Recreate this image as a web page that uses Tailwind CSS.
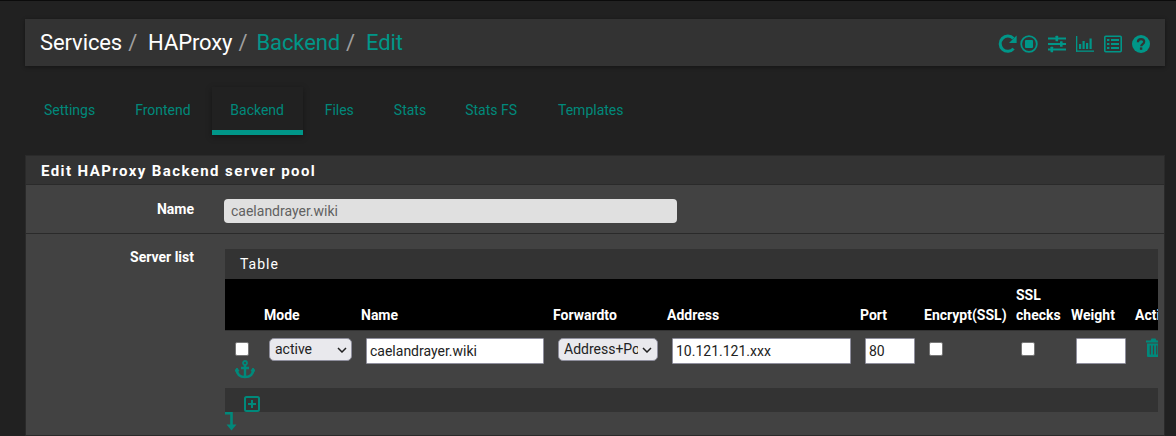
<!doctype html>
<html>
<head>
<meta charset="utf-8">
<script src="https://cdn.jsdelivr.net/npm/@tailwindcss/browser@4"></script>
</head>
<body class="m-0 w-[1176px] h-[436px] overflow-hidden bg-[#212121] font-['Roboto',sans-serif] border-t border-[#0b0b0b]">
<div class="pl-[25px] pr-[11px] pt-[18px]">
  <div class="h-[47px] bg-[#333333] shadow-[0_1px_4px_rgba(0,0,0,0.4)] flex items-center justify-between pl-[15px] pr-[15px]">
    <div class="text-[22px] leading-[46px] tracking-[-0.1px] flex whitespace-nowrap">
      <span class="text-white">Services</span><span class="text-[#a0a0a0] ml-[6px] mr-[11px]">/</span>
      <span class="text-white">HAProxy</span><span class="text-[#a0a0a0] ml-[6px] mr-[9px]">/</span>
      <span class="text-[#009688]">Backend</span><span class="text-[#a0a0a0] ml-[6px] mr-[11px]">/</span>
      <span class="text-[#009688]">Edit</span>
    </div>
    <div class="flex items-center text-[#009688] mt-[3px]">
      <svg class="w-[20px] h-[20px]" viewBox="0 0 20 20" fill="none"><path d="M15.6 14.6A7.6 7.6 0 1 1 15.4 4.6" stroke="currentColor" stroke-width="3"/><path d="M18.6 1.5v7.6h-7.6z" fill="currentColor"/></svg>
      <svg class="w-[18px] h-[18px] ml-[2px]" viewBox="0 0 18 18" fill="none"><circle cx="9" cy="9" r="7.8" stroke="currentColor" stroke-width="1.8"/><rect x="5" y="5" width="8" height="8" rx="1" fill="currentColor"/></svg>
      <svg class="w-[18px] h-[18px] ml-[10px]" viewBox="0 0 18 18" fill="currentColor"><rect x="0" y="2.5" width="18" height="2"/><rect x="0" y="8" width="18" height="2"/><rect x="0" y="13.5" width="18" height="2"/><rect x="7.5" y="0.8" width="2.6" height="5.4" rx=".5"/><rect x="12" y="6.3" width="2.6" height="5.4" rx=".5"/><rect x="2.5" y="11.8" width="2.6" height="5.4" rx=".5"/></svg>
      <svg class="w-[18px] h-[18px] ml-[10px]" viewBox="0 0 18 18" fill="currentColor"><rect x="0" y="1" width="1.3" height="15.5"/><rect x="0" y="15.5" width="18" height="1.3"/><rect x="3" y="9" width="2.2" height="5"/><rect x="6.5" y="6" width="2.2" height="8"/><rect x="10" y="8" width="2.2" height="6"/><rect x="13.5" y="3.5" width="2.2" height="10.5"/></svg>
      <svg class="w-[18px] h-[18px] ml-[10px]" viewBox="0 0 18 18" fill="none"><rect x=".8" y="1.3" width="16.4" height="15.4" rx="1" stroke="currentColor" stroke-width="1.6"/><path d="M3 5h2.4M3 9h2.4M3 13h2.4M7 5h8M7 9h8M7 13h8" stroke="currentColor" stroke-width="2"/></svg>
      <svg class="w-[18px] h-[18px] ml-[10px]" viewBox="0 0 18 18"><circle cx="9" cy="9" r="9" fill="currentColor"/><path d="M5.9 7.2c0-2 1.4-3.1 3.2-3.1s3.1 1 3.1 2.7c0 2.4-3 2.3-3 4.5" fill="none" stroke="#333333" stroke-width="2.2"/><rect x="7.9" y="12.4" width="2.4" height="2.4" fill="#333333"/></svg>
    </div>
  </div>

  <nav class="flex h-[48px] mt-[21px] text-[14px] text-[#00897b] leading-[47px]">
    <a class="px-[19px]">Settings</a>
    <a class="px-[21px]">Frontend</a>
    <a class="w-[91px] text-center border-b-[5px] border-[#009688] shadow-[0_2px_6px_rgba(0,0,0,0.35)]">Backend</a>
    <a class="px-[21px] ml-[1px]">Files</a>
    <a class="px-[19px]">Stats</a>
    <a class="px-[20px]">Stats FS</a>
    <a class="px-[20px] ml-[1px]">Templates</a>
  </nav>

  <section class="mt-[20px] h-[281px] bg-[#424242] border border-[#2a2a2a] overflow-hidden">
    <h2 class="h-[29px] bg-[#333333] border-b border-[#2a2a2a] pl-[15px] text-[15px] leading-[30px] font-bold tracking-[1.41px] text-white">Edit HAProxy Backend server pool</h2>
    <div class="h-[49px] border-b border-[#2a2a2a] flex">
      <div class="w-[168px] text-right text-[14px] font-bold text-white leading-[49px]">Name</div>
      <div class="ml-[30px] mt-[14px] w-[453px] h-[24px] rounded-[4px] bg-[#e0e0e0] pl-[7px] text-[14px] leading-[24px] text-[#616161]">caelandrayer.wiki</div>
    </div>
    <div class="flex pt-[15px]">
      <div class="w-[168px] text-right text-[14px] font-bold text-white leading-[17px]">Server list</div>
      <div class="ml-[31px] w-[933px] overflow-hidden">
        <div class="h-[30px] bg-[#333333] pl-[15px] text-[14px] tracking-[1px] text-white leading-[30px]">Table</div>
        <div class="grid grid-cols-[34px_97px_192px_114px_193px_64px_92px_55px_64px_100px] h-[51px] bg-black items-end text-[14px] font-bold text-white leading-[20px] pb-[5px]">
          <div></div>
          <div class="pl-[5px]">Mode</div>
          <div class="pl-[5px]">Name</div>
          <div class="pl-[5px]">Forwardto</div>
          <div class="pl-[5px]">Address</div>
          <div class="pl-[5px]">Port</div>
          <div class="pl-[5px] whitespace-nowrap">Encrypt(SSL)</div>
          <div class="pl-[5px]">SSL<br>checks</div>
          <div class="pl-[5px]">Weight</div>
          <div class="pl-[5px] whitespace-nowrap">Actions</div>
        </div>
        <div class="grid grid-cols-[34px_97px_192px_114px_193px_64px_92px_55px_64px_100px] h-[58px] border-t border-[#333333] pt-[7px] text-[14px]">
          <div class="pl-[10px]">
            <div class="mt-[4px] w-[14px] h-[14px] bg-white rounded-[2px] border border-[#767676]"></div>
            <svg class="mt-[4px] w-[20px] h-[19px] text-[#00897b]" viewBox="0 0 20 19" fill="none" stroke="currentColor"><circle cx="10" cy="3" r="2" stroke-width="1.8"/><path d="M10 5v12.5M6 8h8" stroke-width="2.4"/><path d="M1.5 9.5c.5 5.5 4.5 7.5 8.5 7.5s8-2 8.5-7.5" stroke-width="2.6"/><path d="M0 11l2-3 2 3zM16 11l2-3 2 3z" fill="currentColor" stroke-width="1"/></svg>
          </div>
          <div class="pl-[10px]"><div class="w-[83px] h-[23px] rounded-[5px] bg-[#e9e9ed] border border-[#8f8f9d] flex items-center justify-between pl-[5px] pr-[3px] text-[#222]">active<svg class="w-[10px] h-[6px] mr-[1px]" viewBox="0 0 10 6" fill="none"><path d="M1 1l4 4 4-4" stroke="#222" stroke-width="1.5"/></svg></div></div>
          <div class="pl-[10px]"><div class="w-[178px] h-[26px] bg-white border border-[#8f8f9d] rounded-[1px] pl-[3px] leading-[25px] text-[#222]">caelandrayer.wiki</div></div>
          <div class="pl-[10px]"><div class="w-[100px] h-[23px] rounded-[5px] bg-[#e9e9ed] border border-[#8f8f9d] flex items-center pl-[5px] text-[#222] overflow-hidden whitespace-nowrap"><span class="w-[74px] overflow-hidden shrink-0">Address+Port</span><svg class="w-[10px] h-[6px] ml-[4px] shrink-0" viewBox="0 0 10 6" fill="none"><path d="M1 1l4 4 4-4" stroke="#222" stroke-width="1.5"/></svg></div></div>
          <div class="pl-[10px]"><div class="w-[179px] h-[26px] bg-white border border-[#8f8f9d] rounded-[1px] pl-[3px] leading-[25px] text-[#222]">10.121.121.xxx</div></div>
          <div class="pl-[10px]"><div class="w-[50px] h-[26px] bg-white border border-[#8f8f9d] rounded-[1px] pl-[3px] leading-[25px] text-[#222]">80</div></div>
          <div class="pl-[10px]"><div class="mt-[4px] w-[14px] h-[14px] bg-white rounded-[2px] border border-[#767676]"></div></div>
          <div class="pl-[10px]"><div class="mt-[4px] w-[14px] h-[14px] bg-white rounded-[2px] border border-[#767676]"></div></div>
          <div class="pl-[10px]"><div class="w-[50px] h-[26px] bg-white border border-[#8f8f9d] rounded-[1px]"></div></div>
          <div class="pl-[16px]"><svg class="w-[15px] h-[19px] text-[#00897b]" viewBox="0 0 15 19" fill="currentColor"><path d="M0 2.5h4.5L5.5 0.5h4L10.5 2.5h4.5v2H0z"/><path d="M1 5.5h13v12.5a1 1 0 0 1-1 1H2a1 1 0 0 1-1-1z"/><path d="M4.3 7.5v9M7.5 7.5v9M10.7 7.5v9" stroke="#424242" stroke-width="1.2"/></svg></div>
        </div>
        <div class="h-[24px] bg-[#333333] pl-[19px] pt-[8px]">
          <svg class="w-[16px] h-[16px] text-[#00897b]" viewBox="0 0 16 16" fill="none" stroke="currentColor"><rect x="1" y="1" width="14" height="14" rx="1.5" stroke-width="2"/><path d="M8 4v8M4 8h8" stroke-width="2"/></svg>
        </div>
        <svg class="w-[12px] h-[19px] text-[#00897b]" viewBox="0 0 12 19" fill="none" stroke="currentColor"><path d="M0 1.2h6.5v12" stroke-width="2.6"/><path d="M1.5 12.5h10L6.5 18.500z" fill="currentColor" stroke="none"/></svg>
      </div>
    </div>
  </section>
</div>
</body>
</html>
